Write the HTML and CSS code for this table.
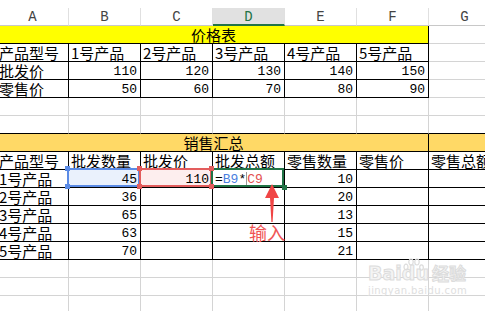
FILE: index.html
```html
<!DOCTYPE html>
<html lang="zh-CN">
<head>
<meta charset="utf-8">
<title>价格表</title>
<link rel="stylesheet" href="styles.css">
</head>
<body>
<div class="sheet">
  <div class="h">A</div><div class="h">B</div><div class="h">C</div><div class="h on">D</div><div class="h">E</div><div class="h">F</div><div class="h">G</div>

  <div class="c m6 yellow k">价格表</div><div class="c"></div>

  <div class="c k">产品型号</div><div class="c k">1号产品</div><div class="c k">2号产品</div><div class="c k">3号产品</div><div class="c k">4号产品</div><div class="c k">5号产品</div><div class="c"></div>

  <div class="c k">批发价</div><div class="c k n">110</div><div class="c k n">120</div><div class="c k n">130</div><div class="c k n">140</div><div class="c k n">150</div><div class="c"></div>

  <div class="c k">零售价</div><div class="c k n">50</div><div class="c k n">60</div><div class="c k n">70</div><div class="c k n">80</div><div class="c k n">90</div><div class="c"></div>

  <div class="c"></div><div class="c"></div><div class="c"></div><div class="c"></div><div class="c"></div><div class="c"></div><div class="c"></div>

  <div class="c kb"></div><div class="c kb"></div><div class="c kb"></div><div class="c kb"></div><div class="c kb"></div><div class="c kb"></div><div class="c kb"></div>

  <div class="c m6 gold k">销售汇总</div><div class="c gold k"></div>

  <div class="c k">产品型号</div><div class="c k">批发数量</div><div class="c k">批发价</div><div class="c k">批发总额</div><div class="c k">零售数量</div><div class="c k">零售价</div><div class="c k">零售总额</div>

  <div class="c k">1号产品</div>
  <div class="c k n selb">45<i class="hd blue tl"></i><i class="hd blue bl"></i></div>
  <div class="c k n selr">110<i class="hd red tl"></i><i class="hd red bl"></i><i class="hd red tr"></i><i class="hd red br"></i></div>
  <div class="c k f selg">=<span class="rb">B9</span>*<span class="caret"></span><span class="rr">C9</span><i class="hd green brg"></i></div>
  <div class="c k n">10</div><div class="c k"></div><div class="c k"></div>

  <div class="c k">2号产品</div><div class="c k n">36</div><div class="c k"></div><div class="c k"></div><div class="c k n">20</div><div class="c k"></div><div class="c k"></div>
  <div class="c k">3号产品</div><div class="c k n">65</div><div class="c k"></div><div class="c k"></div><div class="c k n">13</div><div class="c k"></div><div class="c k"></div>
  <div class="c k">4号产品</div><div class="c k n">63</div><div class="c k"></div><div class="c k"></div><div class="c k n">15</div><div class="c k"></div><div class="c k"></div>
  <div class="c k">5号产品</div><div class="c k n">70</div><div class="c k"></div><div class="c k"></div><div class="c k n">21</div><div class="c k"></div><div class="c k"></div>

  <div class="c"></div><div class="c"></div><div class="c"></div><div class="c"></div><div class="c"></div><div class="c"></div><div class="c"></div>
  <div class="c"></div><div class="c"></div><div class="c"></div><div class="c"></div><div class="c"></div><div class="c"></div><div class="c"></div>
  <div class="c"></div><div class="c"></div><div class="c"></div><div class="c"></div><div class="c"></div><div class="c"></div><div class="c"></div>
</div>

<svg class="arrow" width="20" height="42" viewBox="0 0 20 42">
  <path d="M10 0 L17 14 L12 14 L10.6 38 L9.4 38 L8 14 L3 14 Z" fill="#f04545"/>
</svg>
<div class="note">输入</div>

<div class="wm">
  <div class="wm-logo">Bai<span class="paw"><svg width="22" height="16" viewBox="0 0 22 16"><g fill="none" stroke="#dcdcdc" stroke-width="1.2"><ellipse cx="4" cy="9" rx="2" ry="2.8"/><ellipse cx="9" cy="4" rx="2.2" ry="3"/><ellipse cx="15" cy="4" rx="2.2" ry="3"/><ellipse cx="19.5" cy="9.5" rx="1.8" ry="2.6"/></g></svg></span>du<span class="jy">经验</span></div>
  <div class="wm-url">jingyan.baidu.com</div>
</div>
</body>
</html>
```

FILE: styles.css
```css
html, body {
  margin: 0;
  width: 485px;
  height: 311px;
  overflow: hidden;
  background: #fff;
}
body {
  position: relative;
  padding-top: 8px;
  box-sizing: border-box;
  font-family: "Noto Sans CJK SC", sans-serif;
  color: #000;
}
.sheet {
  display: grid;
  grid-template-columns: repeat(7, 72px);
  grid-auto-rows: 18px;
  margin-left: -3px;
  width: 504px;
}
.h {
  box-sizing: border-box;
  border-right: 1px solid #e0e0e0;
  border-bottom: 1px solid #c8c8c8;
  font-family: "Liberation Mono", monospace;
  font-size: 14px;
  line-height: 18px;
  color: #444;
  text-align: center;
}
.h.on {
  background: #e1e1e1;
  color: #217346;
  border-bottom: 2px solid #217346;
}
.c {
  box-sizing: border-box;
  position: relative;
  border-right: 1px solid #d4d4d4;
  border-bottom: 1px solid #d4d4d4;
  font-size: 15px;
  line-height: 17px;
  padding: 0 0 0 2px;
  white-space: nowrap;
}
.n {
  text-align: right;
  padding: 2px 3px 0 0;
  font-family: "Liberation Mono", monospace;
  font-size: 13px;
  line-height: 15px;
}
.f {
  padding: 2px 0 0 2px;
  font-family: "Liberation Mono", monospace;
  font-size: 13px;
  line-height: 15px;
}
.k { border-right-color: #000; border-bottom-color: #000; }
.kb { border-bottom-color: #000; }
.m6 { grid-column: span 6; text-align: center; }
.yellow { background: #ffff00; }
.gold { background: #ffd966; }

.selb { background: #eaf1fc; }
.selr { background: #fdeeee; }
.selb::after, .selr::after, .selg::after {
  content: "";
  position: absolute;
  left: -2px;
  top: -2px;
  right: 0;
  bottom: 0;
  border: 2px solid #5b8be5;
  pointer-events: none;
}
.selr::after { border-color: #e35d5d; }
.selg::after { border-color: #217346; }
.rb { color: #4a7fe0; }
.rr { color: #e35050; }
.caret {
  display: inline-block;
  width: 1px;
  height: 14px;
  background: #999;
  vertical-align: -3px;
}
.hd {
  position: absolute;
  width: 5px;
  height: 5px;
  z-index: 2;
}
.blue { background: #5b8be5; }
.red { background: #e35d5d; }
.green { background: #217346; }
.tl { left: -4px; top: -4px; }
.bl { left: -4px; bottom: -2px; }
.tr { right: -2px; top: -4px; }
.br { right: -2px; bottom: -2px; }
.brg { right: -3px; bottom: -3px; }

.arrow {
  position: absolute;
  left: 262px;
  top: 184px;
}
.note {
  position: absolute;
  left: 249px;
  top: 221px;
  font-size: 18px;
  line-height: 22px;
  color: #f05555;
}
.wm {
  position: absolute;
  left: 368px;
  top: 262px;
  width: 100px;
  font-family: "DejaVu Sans", sans-serif;
  white-space: nowrap;
}
.wm-logo {
  font-size: 19px;
  font-weight: bold;
  line-height: 22px;
  color: #f4f4f4;
  -webkit-text-stroke: 1px #dcdcdc;
}
.paw {
  display: inline-block;
  position: relative;
  width: 0;
  height: 0;
}
.paw svg { position: absolute; left: 0; top: -22px; }
.jy {
  font-family: "Noto Sans CJK SC", sans-serif;
  font-size: 17px;
  margin-left: 3px;
}
.wm-url {
  font-size: 10px;
  line-height: 13px;
  letter-spacing: 0.4px;
  color: #dedede;
}
```
